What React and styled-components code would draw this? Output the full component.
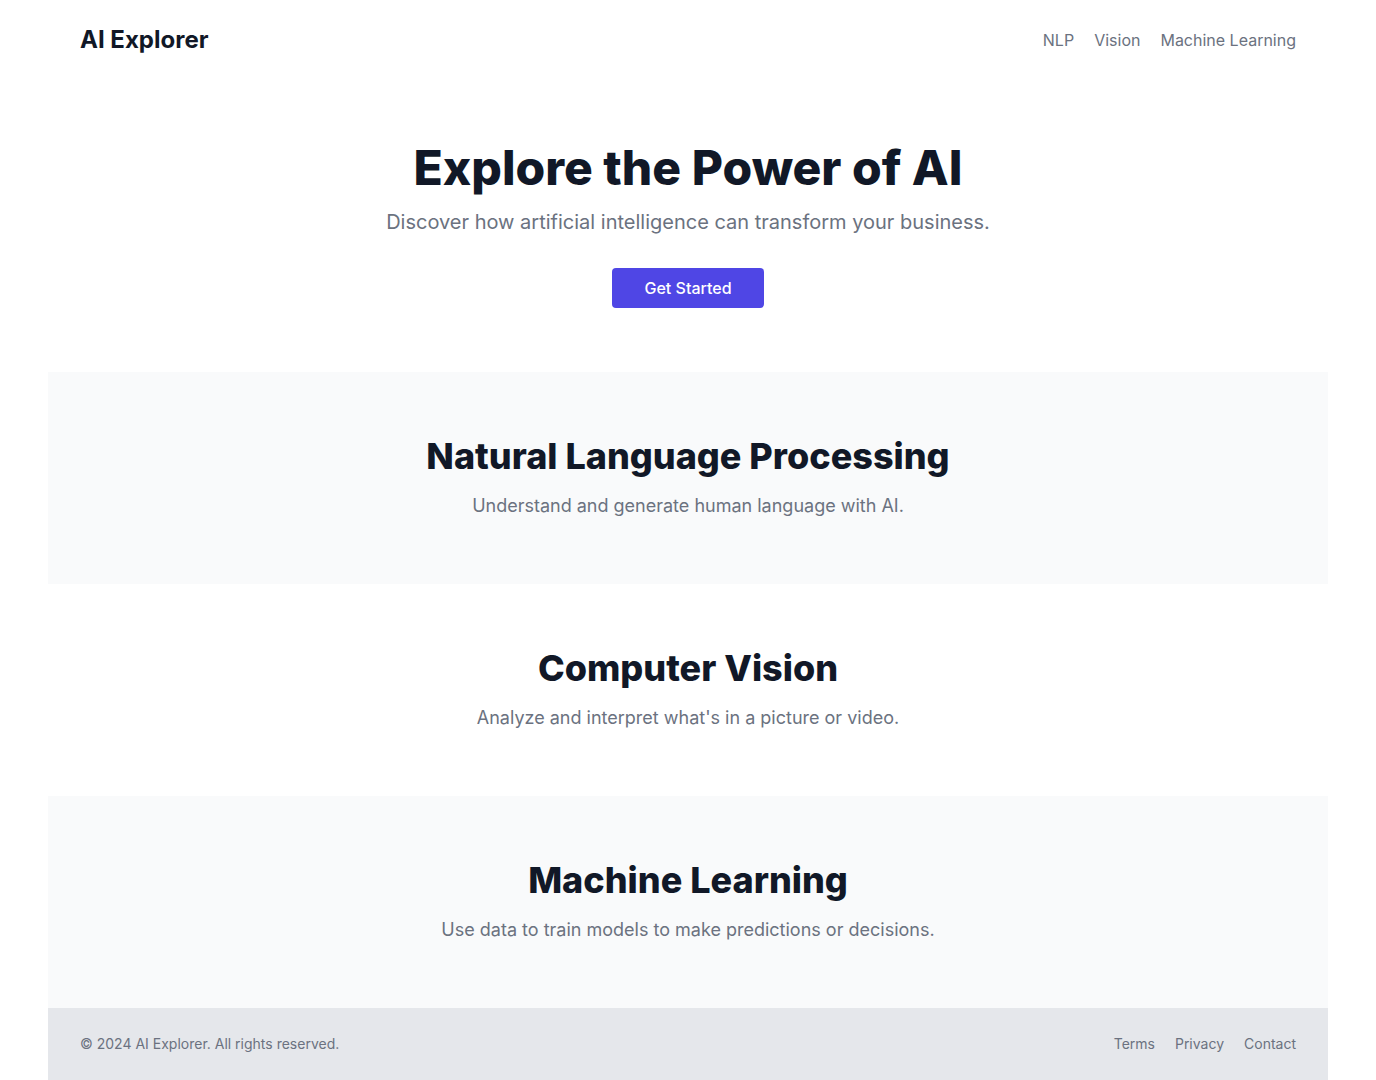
import React from "react";
import styled, { createGlobalStyle } from "styled-components";

const GlobalStyle = createGlobalStyle`
  * {
    box-sizing: border-box;
  }

  body {
    margin: 0;
    background: #ffffff;
    font-family: Inter, "Noto Sans", sans-serif;
    color: #111827;
  }
`;

const sections = [
  {
    title: "Natural Language Processing",
    text: "Understand and generate human language with AI.",
    tinted: true,
  },
  {
    title: "Computer Vision",
    text: "Analyze and interpret what's in a picture or video.",
    tinted: false,
  },
  {
    title: "Machine Learning",
    text: "Use data to train models to make predictions or decisions.",
    tinted: true,
  },
];

export default function App() {
  return (
    <>
      <GlobalStyle />
      <Page>
        <Header>
          <Logo>AI Explorer</Logo>
          <Nav>
            <NavLink href="#nlp">NLP</NavLink>
            <NavLink href="#vision">Vision</NavLink>
            <NavLink href="#ml">Machine Learning</NavLink>
          </Nav>
        </Header>

        <Hero>
          <H1>Explore the Power of AI</H1>
          <Lead>Discover how artificial intelligence can transform your business.</Lead>
          <Btn>Get Started</Btn>
        </Hero>

        {sections.map((s) => (
          <Feature key={s.title} $tinted={s.tinted}>
            <H2>{s.title}</H2>
            <FeatureText>{s.text}</FeatureText>
          </Feature>
        ))}

        <Footer>
          <Copy>© 2024 AI Explorer. All rights reserved.</Copy>
          <FooterLinks>
            <FooterLink href="#terms">Terms</FooterLink>
            <FooterLink href="#privacy">Privacy</FooterLink>
            <FooterLink href="#contact">Contact</FooterLink>
          </FooterLinks>
        </Footer>
      </Page>
    </>
  );
}

const Page = styled.div`
  max-width: 1280px;
  margin: 0 auto;
`;

const Header = styled.header`
  display: flex;
  align-items: center;
  justify-content: space-between;
  padding: 24px 32px;
`;

const Logo = styled.div`
  font-size: 24px;
  line-height: 32px;
  font-weight: 700;
  color: #111827;
`;

const Nav = styled.nav`
  display: flex;
  gap: 20px;
`;

const NavLink = styled.a`
  font-size: 16px;
  line-height: 24px;
  color: #6b7280;
  text-decoration: none;
`;

const Hero = styled.section`
  display: flex;
  flex-direction: column;
  align-items: center;
  padding: 64px 32px;
  text-align: center;
`;

const H1 = styled.h1`
  margin: 0 0 16px 0;
  font-size: 48px;
  line-height: 48px;
  font-weight: 800;
  color: #111827;
`;

const Lead = styled.p`
  margin: 0 0 32px 0;
  font-size: 20px;
  line-height: 28px;
  color: #6b7280;
`;

const Btn = styled.button`
  background-color: #4f46e5;
  color: #ffffff;
  border: none;
  border-radius: 4px;
  padding: 8px 32px;
  height: 40px;
  font-family: inherit;
  font-size: 16px;
  line-height: 24px;
  font-weight: 500;
  cursor: pointer;
`;

const Feature = styled.section`
  background: ${(p) => (p.$tinted ? "#f9fafb" : "#ffffff")};
  padding: 64px 32px;
  text-align: center;
`;

const H2 = styled.h2`
  margin: 0 0 16px 0;
  font-size: 36px;
  line-height: 40px;
  font-weight: 800;
  color: #111827;
`;

const FeatureText = styled.p`
  margin: 0;
  font-size: 18px;
  line-height: 28px;
  color: #6b7280;
`;

const Footer = styled.footer`
  display: flex;
  align-items: center;
  justify-content: space-between;
  background: #e5e7eb;
  padding: 24px 32px;
`;

const Copy = styled.p`
  margin: 0;
  font-size: 14px;
  line-height: 24px;
  color: #6b7280;
`;

const FooterLinks = styled.div`
  display: flex;
  gap: 20px;
`;

const FooterLink = styled.a`
  font-size: 14px;
  line-height: 24px;
  color: #6b7280;
  text-decoration: none;
`;
